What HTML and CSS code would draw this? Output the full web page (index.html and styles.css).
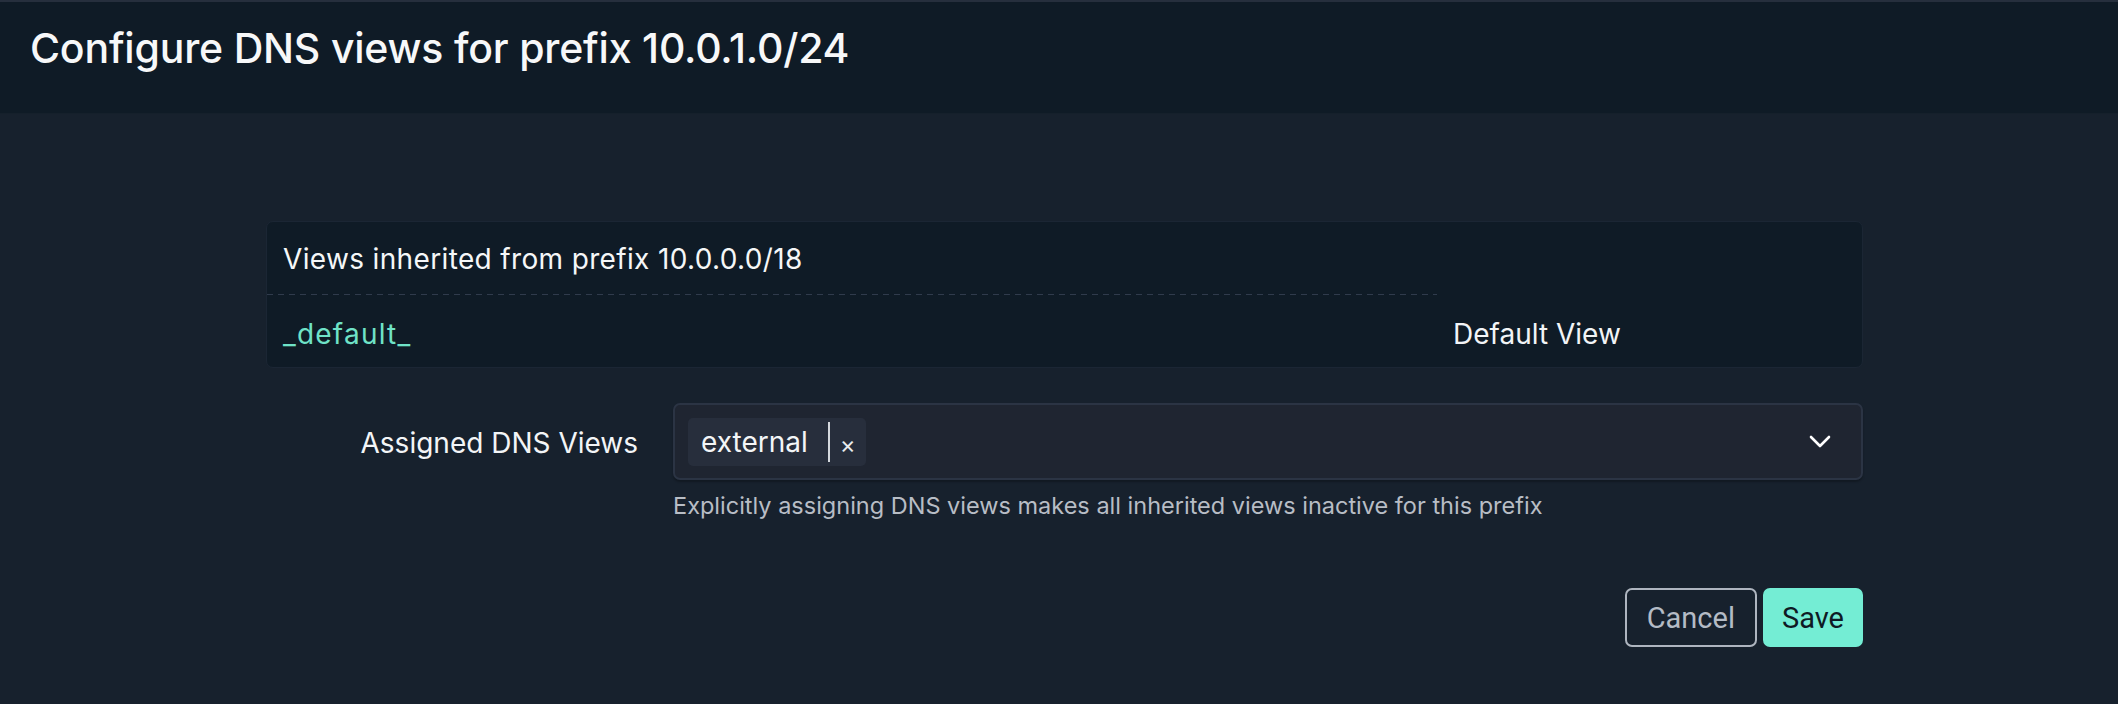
FILE: index.html
```html
<!DOCTYPE html>
<html>
<head>
<meta charset="utf-8">
<link rel="stylesheet" href="styles.css">
</head>
<body>
<div class="page">
  <header class="modal-header">
    <h1 class="title">Configure DNS views for prefix 10.0.1.0/24</h1>
  </header>
  <main class="modal-body">
    <section class="inherited">
      <div class="cell head">Views inherited from prefix 10.0.0.0/18</div>
      <div class="cell empty"></div>
      <div class="cell view-name">_default_</div>
      <div class="cell view-desc">Default View</div>
    </section>
    <div class="form-row">
      <label class="form-label">Assigned DNS Views</label>
      <div class="field">
        <div class="select">
          <div class="chips">
            <span class="chip"><span class="chip-text">external</span><span class="chip-sep"></span><span class="chip-x">×</span></span>
          </div>
          <svg class="chevron" width="22" height="14" viewBox="0 0 22 14"><path d="M2 2 L11 11 L20 2" fill="none" stroke="#ffffff" stroke-width="2.6" stroke-linecap="round" stroke-linejoin="round"/></svg>
        </div>
        <div class="help">Explicitly assigning DNS views makes all inherited views inactive for this prefix</div>
      </div>
    </div>
    <div class="actions">
      <button class="btn btn-cancel">Cancel</button>
      <button class="btn btn-save">Save</button>
    </div>
  </main>
</div>
</body>
</html>
```
FILE: styles.css
```css
* { box-sizing: border-box; }
html, body {
  margin: 0;
  padding: 0;
  background: #17212d;
  font-family: Inter, "Noto Sans", sans-serif;
  color: #f3f5f7;
}
.page {
  width: 2118px;
  height: 704px;
  border-top: 2px solid #262f3d;
  background: #17212d;
}
.modal-header {
  background: #0f1b26;
  padding: 21px 30px 40px;
  height: 112px;
  border-bottom: 1px solid #15202b;
}
.title {
  margin: 0;
  font-size: 41px;
  line-height: 50px;
  font-weight: 500;
  color: #f7f8f9;
  letter-spacing: -0.2px;
}
.modal-body {
  padding: 107px 255px 0 266px;
}
.inherited {
  display: grid;
  grid-template-columns: 1fr 425px;
  grid-template-rows: 73px 72px;
  background: #0f1b26;
  border: 1px solid #1b2634;
  border-radius: 7px;
}
.cell {
  font-size: 28px;
  line-height: 40px;
  padding: 17px 16px 0;
}
.head {
  background-image: linear-gradient(to right, #303b4c 0 6px, transparent 6px 11px);
  background-size: 11px 1px;
  background-repeat: repeat-x;
  background-position: left bottom;
  color: #f5f7f8;
  letter-spacing: 0.35px;
}
.view-name {
  color: #6fe3c8;
  padding-top: 19px;
  letter-spacing: 1.2px;
}
.view-desc {
  color: #f2f4f6;
  padding-top: 19px;
}
.form-row {
  display: grid;
  grid-template-columns: 372px 1fr;
  column-gap: 35px;
  margin-top: 35px;
}
.form-label {
  text-align: right;
  font-size: 28px;
  line-height: 40px;
  padding-top: 20px;
  color: #f3f5f7;
}
.select {
  height: 77px;
  background: #1f2531;
  border: 2px solid #2b3444;
  border-radius: 7px;
  box-shadow: 0 2px 2px rgba(0,0,0,0.25);
  display: flex;
  align-items: center;
  padding: 0 30px 0 13px;
}
.chips {
  flex: 1;
  display: flex;
}
.chip {
  display: inline-flex;
  align-items: center;
  height: 48px;
  background: #272e3c;
  border-radius: 5px;
  padding: 0 10px 0 13px;
}
.chip-text {
  font-size: 28px;
  line-height: 40px;
  color: #f3f5f7;
}
.chip-sep {
  width: 2px;
  height: 40px;
  background: #d4d8dd;
  margin-left: 20px;
  margin-right: 10px;
}
.chip-x {
  font-size: 24px;
  line-height: 30px;
  color: #e9ecef;
  padding-top: 6px;
}
.chevron {
  display: block;
}
.help {
  font-size: 23.5px;
  line-height: 32px;
  color: #b8bdc5;
  margin-top: 10px;
}
.actions {
  display: flex;
  justify-content: flex-end;
  gap: 6px;
  margin-top: 66px;
}
.btn {
  font-family: Roboto, Inter, sans-serif;
  font-size: 29px;
  height: 59px;
  border-radius: 7px;
  padding: 0 18px;
  cursor: pointer;
}
.btn-cancel {
  background: transparent;
  border: 2px solid #aeb5bf;
  color: #b4bbc5;
  padding: 0 20px;
}
.btn-save {
  background: #74edd4;
  border: 2px solid #74edd4;
  color: #0e1a24;
  padding: 0 17px;
}
```
